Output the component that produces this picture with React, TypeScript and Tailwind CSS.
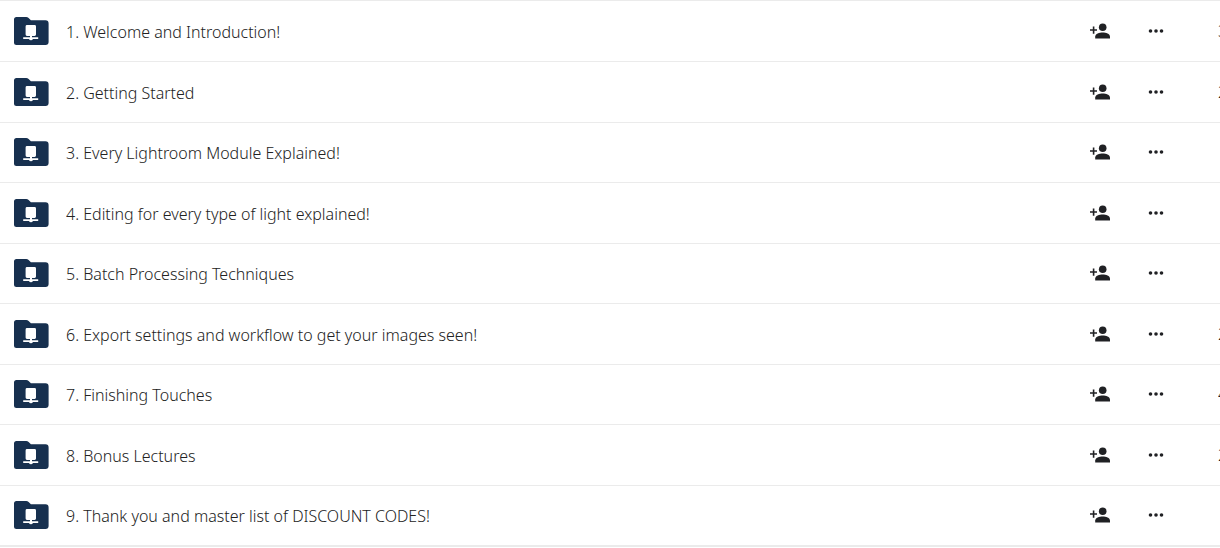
import React from "react";

type Folder = { name: string; size: string };

const folders: Folder[] = [
  { name: "1. Welcome and Introduction!", size: "3" },
  { name: "2. Getting Started", size: "2" },
  { name: "3. Every Lightroom Module Explained!", size: "" },
  { name: "4. Editing for every type of light explained!", size: "" },
  { name: "5. Batch Processing Techniques", size: "" },
  { name: "6. Export settings and workflow to get your images seen!", size: "2" },
  { name: "7. Finishing Touches", size: "4" },
  { name: "8. Bonus Lectures", size: "2" },
  { name: "9. Thank you and master list of DISCOUNT CODES!", size: "" },
];

function FolderIcon() {
  return (
    <svg className="h-7 w-[35px] shrink-0" viewBox="0 0 35 28" aria-hidden="true">
      <path
        d="M2.5 0H12.2Q13.6 0 14.6 1L16.9 3.3H31.5Q34.6 3.3 34.6 6.4V25Q34.6 28 31.5 28H2.5Q0 28 0 25.5V2.5Q0 0 2.5 0Z"
        fill="#17304f"
      />
      <path
        d="M13 8H20.6Q22 8 22 9.4V17.6Q22 19 20.6 19H18V20.3H24.2V22H18.9Q18.5 23.2 17 23.2Q15.4 23.2 15 22H9.2V20.3H16V19H13Q11.6 19 11.6 17.6V9.4Q11.6 8 13 8Z"
        fill="#fff"
      />
    </svg>
  );
}

function AddPersonIcon() {
  return (
    <svg className="h-4 w-5" viewBox="0 0 20 16" fill="#202124" aria-hidden="true">
      <circle cx="12.7" cy="4.2" r="3.8" />
      <path d="M5.2 15.4V13.6C5.2 10.9 9.4 9.5 12.7 9.5S20 10.9 20 13.6V15.4Z" />
      <path d="M2.8 3.4H4.4V6.2H7V7.8H4.4V10.8H2.8V7.8H0V6.2H2.8Z" />
    </svg>
  );
}

function MoreIcon() {
  return (
    <svg className="h-4 w-4" viewBox="0 0 16 16" fill="#202124" aria-hidden="true">
      <circle cx="2.5" cy="8" r="1.8" />
      <circle cx="8" cy="8" r="1.8" />
      <circle cx="13.5" cy="8" r="1.8" />
    </svg>
  );
}

export default function App() {
  return (
    <main className="overflow-hidden bg-white font-['Noto_Sans','Open_Sans',sans-serif] text-base font-light text-[#222]">
      <ul className="border-y border-[#ebebeb]">
        {folders.map((folder) => (
          <li
            key={folder.name}
            className="flex h-[60px] items-center border-b border-[#ebebeb] pl-3.5 first:h-[61px] even:h-[61px] nth-[2n+3]:pb-px"
          >
            <FolderIcon />
            <a href="#" className="ml-[17px] min-w-0 flex-1 truncate pt-0.5">
              {folder.name}
            </a>
            <button type="button" aria-label={`Share ${folder.name}`} className="flex w-8 justify-center">
              <AddPersonIcon />
            </button>
            <button type="button" aria-label={`More options for ${folder.name}`} className="ml-6 flex w-8 justify-center">
              <MoreIcon />
            </button>
            <span className="ml-[46px] w-0.5 overflow-hidden whitespace-nowrap">{folder.size}</span>
          </li>
        ))}
      </ul>
    </main>
  );
}
